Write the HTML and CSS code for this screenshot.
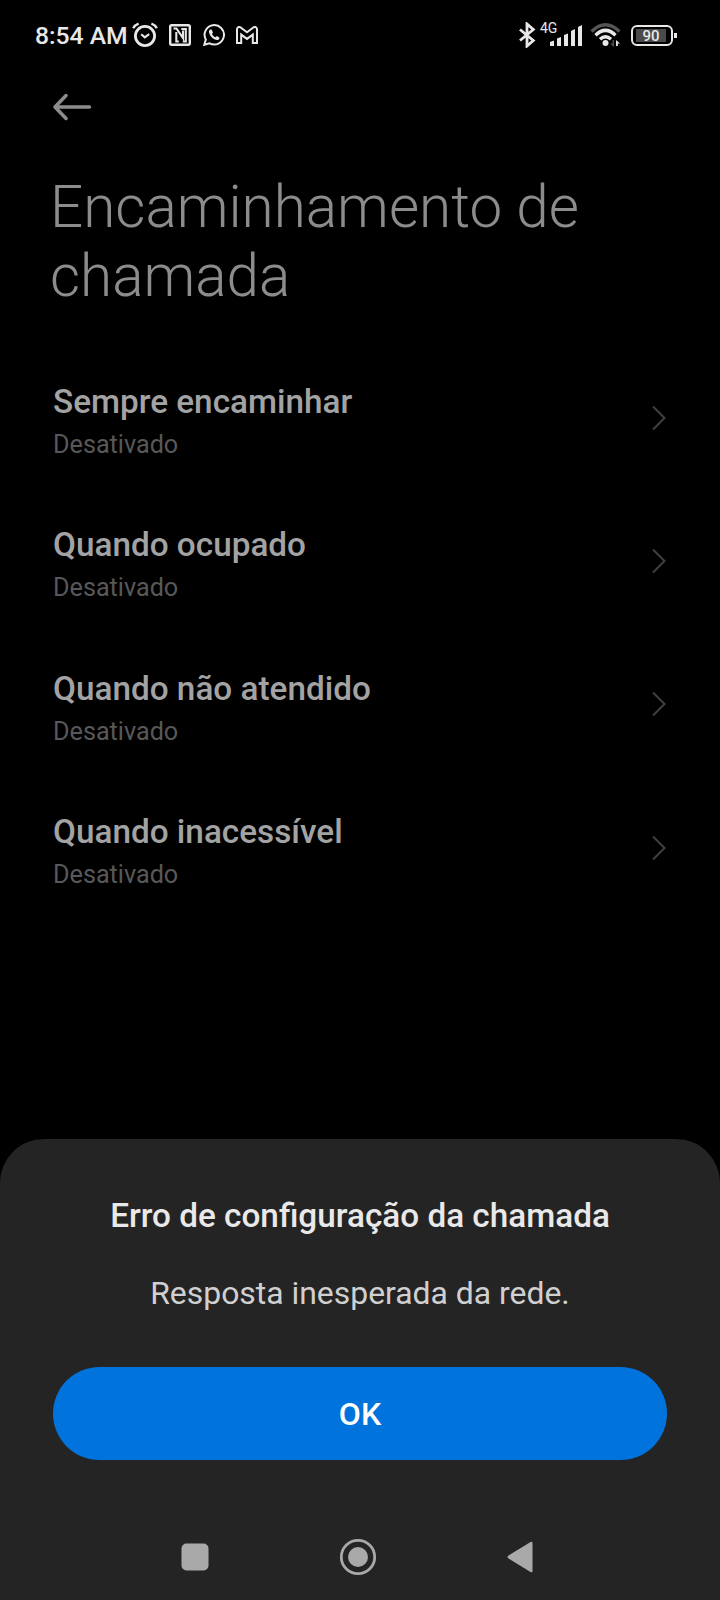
FILE: index.html
```html
<!DOCTYPE html>
<html lang="pt-BR">
<head>
    <meta charset="UTF-8">
    <meta name="viewport" content="width=device-width, initial-scale=1.0">
    <title>Encaminhamento de chamada</title>
    <link rel="stylesheet" href="styles.css">
</head>
<body>

    <div class="screen">
        <header class="status-bar">
            <span class="time">8:54 AM</span>
            <div class="notifications">
                <svg class="alarm" width="26" height="26" viewBox="0 0 26 26">
                    <circle cx="13" cy="14" r="9.6" stroke-width="2.8"/>
                    <path d="M1.2 6.2Q2.8 3 6.6 1.6M24.8 6.2Q23.2 3 19.4 1.6" stroke-width="2.4"/>
                    <path d="M9.2 12.2l3.6 3.2 4.4-3.2" stroke-width="2.2"/>
                </svg>
                <svg class="nfc" width="22" height="22" viewBox="0 0 22 22">
                    <rect x="1.2" y="1.2" width="19.6" height="19.6" rx="1.5" stroke-width="2.4"/>
                    <path d="M4.500 4.500h3l6.500 9.500V6.500M7.300 8v9.500h2.500M12.300 5h4.500v12.500h-3" stroke-width="2.1"/>
                </svg>
                <svg class="whatsapp" width="22" height="22" viewBox="0 0 22 22">
                    <path d="M1.3 20.8l1.5-5.3a9.7 9.7 0 1 1 3.8 3.8z" stroke-width="2"/>
                    <path class="fill" d="M7.3 5.6c-.8.5-1.5 1.5-1.3 2.6.5 3.6 4.6 7.5 8 7.8 1.4 0 2.5-.9 2.6-2.3l-2.7-1.7-1.5 1.2c-1.5-.6-2.7-1.9-3.4-3.3l1-1.3-1.3-2.8c-.3-.5-.9-.5-1.4-.2z"/>
                </svg>
                <svg class="gmail" width="22" height="18" viewBox="0 0 22 18">
                    <path d="M1 3.2V17h4.200V8.600l5.800 4.300 5.800-4.300V17H21V3.200c0-2-2.200-2.800-3.700-1.700L11 6.300 4.700 1.500C3.200.4 1 1.200 1 3.200z" stroke-width="2"/>
                </svg>
            </div>

            <div class="system">
                <svg class="bluetooth" width="18" height="26" viewBox="0 0 18 26">
                    <path d="M2 7.500L15.300 18.500 9 24V2l6.300 5.500L2 18.500" stroke-width="2.800"/>
                </svg>
                <div class="signal">
                    <span class="network">4G</span>
                    <svg width="32" height="22" viewBox="0 0 32 22">
                        <path class="fill" d="M0 18l4-1.500V22H0zM7 14.500l4-1.500v9H7zM14 11l4-1.500V22h-4zM21 7l4-2v17h-4zM28 3l4-2v21h-4z"/>
                    </svg>
                </div>
                <svg class="wifi" width="32" height="24" viewBox="0 0 32 24">
                    <path class="dim" d="M1.500 8.500Q15.500-5 29.500 8.500" stroke-width="3.2"/>
                    <path d="M5.500 12.200Q15.500 2.500 25.500 12.200M10 16.300Q15.500 11.300 21 16.300" stroke-width="3.4"/>
                    <circle class="fill" cx="15.500" cy="20" r="3"/>
                    <path class="fill" d="M26 23v-6l4 3.500h-2.200V23z"/>
                    <path class="dim" d="M23.300 17v5.500l-2-2" stroke-width="1.300"/>
                </svg>
                <div class="battery">
                    <span class="level">90</span>
                </div>
            </div>
        </header>

        <main class="content">
            <svg class="back" width="40" height="28" viewBox="0 0 40 28">
                <path d="M36.500 14H2M13 2.500L2 14l11 11.500"/>
            </svg>

            <h1>Encaminhamento de chamada</h1>

            <div class="options">
                <div class="option">
                    <div class="option-text">
                        <h2>Sempre encaminhar</h2>
                        <p>Desativado</p>
                    </div>
                    <svg class="chevron" width="14" height="26" viewBox="0 0 14 26"><path d="M1 1.500l11.500 11.500L1 24.500"/></svg>
                </div>
                <div class="option">
                    <div class="option-text">
                        <h2>Quando ocupado</h2>
                        <p>Desativado</p>
                    </div>
                    <svg class="chevron" width="14" height="26" viewBox="0 0 14 26"><path d="M1 1.500l11.500 11.500L1 24.500"/></svg>
                </div>
                <div class="option">
                    <div class="option-text">
                        <h2>Quando não atendido</h2>
                        <p>Desativado</p>
                    </div>
                    <svg class="chevron" width="14" height="26" viewBox="0 0 14 26"><path d="M1 1.500l11.500 11.500L1 24.500"/></svg>
                </div>
                <div class="option">
                    <div class="option-text">
                        <h2>Quando inacessível</h2>
                        <p>Desativado</p>
                    </div>
                    <svg class="chevron" width="14" height="26" viewBox="0 0 14 26"><path d="M1 1.500l11.500 11.500L1 24.500"/></svg>
                </div>
            </div>
        </main>

        <section class="dialog">
            <h3>Erro de configuração da chamada</h3>
            <p>Resposta inesperada da rede.</p>
            <button class="ok-btn">OK</button>

            <nav class="nav-bar">
                <svg width="38" height="38" viewBox="0 0 38 38"><rect x="5.500" y="5.500" width="27" height="27" rx="5"/></svg>
                <svg width="38" height="38" viewBox="0 0 38 38">
                    <circle class="ring" cx="19" cy="19" r="16.700"/>
                    <circle cx="19" cy="19" r="10"/>
                </svg>
                <svg width="38" height="38" viewBox="0 0 38 38"><path d="M7.500 17.600L29.500 4q2-1 2 1v28q0 2-2 1L7.500 20.400q-2-1.400 0-2.800z"/></svg>
            </nav>
        </section>
    </div>

</body>
</html>
```

FILE: styles.css
```css
* {
    box-sizing: border-box;
}

body {
    margin: 0;
    background: #000;
    font-family: Roboto, sans-serif;
}

h1, h2, h3, p {
    margin: 0;
}

svg {
    display: block;
    flex: none;
}

.screen {
    width: 720px;
    height: 1600px;
    display: flex;
    flex-direction: column;
    overflow: hidden;
}

/* status bar */
.status-bar {
    display: flex;
    align-items: center;
    height: 70px;
    padding: 0 47px 0 35px;
    color: #e8e8e8;
}

.status-bar svg {
    fill: none;
    stroke: #e8e8e8;
}

.status-bar .fill {
    fill: #e8e8e8;
    stroke: none;
}

.status-bar .dim {
    stroke: #555;
}

.time {
    width: 97px;
    padding-top: 2px;
    font-size: 24.7px;
    font-weight: 500;
    line-height: 30px;
    white-space: nowrap;
}

.notifications {
    display: flex;
    align-items: center;
}

.nfc { margin-left: 11px; }
.whatsapp { margin-left: 12px; }
.gmail { margin-left: 11px; }

.system {
    display: flex;
    align-items: center;
    margin-left: auto;
}

.signal {
    position: relative;
    margin-left: 14px;
}

.network {
    position: absolute;
    left: -10px;
    top: -4px;
    font-size: 14px;
    line-height: 16px;
}

.wifi {
    margin-left: 8px;
}

.battery {
    position: relative;
    width: 42px;
    height: 21px;
    margin-left: 9px;
    padding: 2px;
    border: 2px solid #e8e8e8;
    border-radius: 6px;
}

.battery::after {
    content: "";
    position: absolute;
    right: -6px;
    top: 6px;
    width: 3px;
    height: 5px;
    background: #e8e8e8;
}

.level {
    display: block;
    width: 30px;
    height: 13px;
    margin-left: 1px;
    background: #4a4a4a;
    font-size: 15px;
    font-weight: 500;
    line-height: 14px;
    text-align: center;
}

/* settings page */
.content {
    flex: 1;
    padding: 23px 53px 0;
}

.back {
    fill: none;
    stroke: #8c8c8c;
    stroke-width: 3.5;
    stroke-linecap: round;
    stroke-linejoin: round;
}

h1 {
    margin: 52px 0 0 -3px;
    color: #8c8c8c;
    font-size: 58.4px;
    font-weight: 300;
    line-height: 68.5px;
}

.options {
    margin-top: 36px;
}

.option {
    display: flex;
    align-items: center;
    justify-content: space-between;
    height: 143.3px;
}

.option-text {
    margin-top: 12px;
}

h2 {
    color: #a3a3a3;
    font-size: 33.3px;
    font-weight: 500;
    line-height: 42px;
}

.option p {
    color: #585858;
    font-size: 25.2px;
    line-height: 43px;
}

.chevron {
    margin-right: 1px;
    fill: none;
    stroke: #404040;
    stroke-width: 2;
}

/* error dialog */
.dialog {
    height: 461px;
    padding: 56px 53px 0;
    background: #242424;
    border-radius: 44px 44px 0 0;
    text-align: center;
}

h3 {
    color: #e9e9e9;
    font-size: 33.3px;
    font-weight: 500;
    line-height: 42px;
}

.dialog p {
    margin-top: 35px;
    color: #d0d0d0;
    font-size: 31.9px;
    line-height: 42px;
}

.ok-btn {
    display: block;
    width: 100%;
    height: 93px;
    margin-top: 53px;
    border: none;
    border-radius: 47px;
    background: #0073dd;
    color: #fff;
    font-family: inherit;
    font-size: 32px;
    font-weight: 500;
}

.nav-bar {
    display: flex;
    gap: 124.7px;
    margin: 78px 0 0 123px;
    fill: #a9a9a9;
}

.ring {
    fill: none;
    stroke: #a9a9a9;
    stroke-width: 2.8;
}
```
